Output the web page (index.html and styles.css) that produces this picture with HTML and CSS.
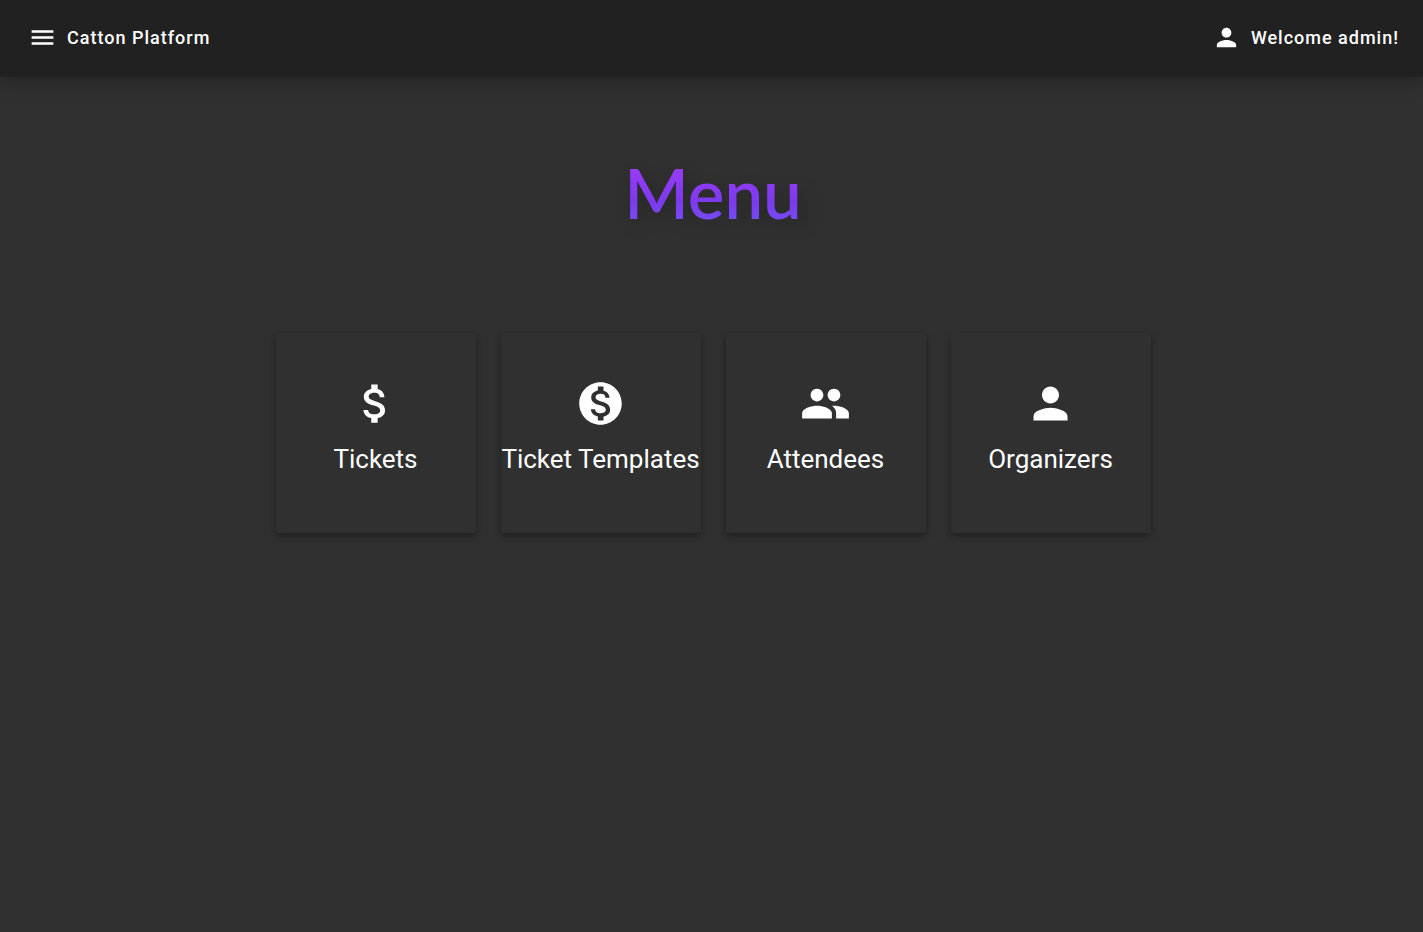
FILE: index.html
```html
<!DOCTYPE html>
<html lang="en">
<head>
  <meta charset="utf-8">
  <title>Catton Platform</title>
  <link rel="stylesheet" href="styles.css">
</head>
<body>
  <header class="toolbar">
    <button class="toolbar-item" type="button">
      <svg class="toolbar-icon" viewBox="0 0 24 24" aria-hidden="true"><path d="M3 18h18v-2H3v2zm0-5h18v-2H3v2zm0-7v2h18V6H3z"/></svg>
      <span>Catton Platform</span>
    </button>
    <button class="toolbar-item" type="button">
      <svg class="toolbar-icon" viewBox="0 0 24 24" aria-hidden="true"><path d="M12 12c2.210 0 4-1.790 4-4s-1.790-4-4-4-4 1.790-4 4 1.790 4 4 4zm0 2c-2.670 0-8 1.340-8 4v2h16v-2c0-2.660-5.330-4-8-4z"/></svg>
      <span>Welcome admin!</span>
    </button>
  </header>
  <main class="content">
    <h1 class="title">Menu</h1>
    <nav class="cards" aria-label="Menu">
      <a class="card" href="#tickets">
        <svg class="card-icon" viewBox="0 0 24 24" aria-hidden="true"><path d="M11.800 10.900c-2.270-.59-3-1.200-3-2.150 0-1.090 1.010-1.850 2.700-1.850 1.780 0 2.440.85 2.500 2.100h2.210c-.07-1.720-1.120-3.300-3.210-3.810V3h-3v2.160c-1.940.42-3.500 1.680-3.500 3.610 0 2.310 1.910 3.460 4.700 4.130 2.500.6 3 1.480 3 2.410 0 .69-.49 1.790-2.700 1.790-2.060 0-2.870-.92-2.980-2.100h-2.200c.12 2.190 1.760 3.420 3.680 3.830V21h3v-2.150c1.950-.37 3.500-1.500 3.500-3.550 0-2.840-2.430-3.810-4.700-4.400z"/></svg>
        <span>Tickets</span>
      </a>
      <a class="card" href="#templates">
        <svg class="card-icon" viewBox="0 0 24 24" aria-hidden="true"><path d="M12 2C6.480 2 2 6.480 2 12s4.480 10 10 10 10-4.480 10-10S17.520 2 12 2zm1.410 16.090V20h-2.670v-1.930c-1.710-.36-3.160-1.460-3.270-3.400h1.960c.1 1.050.82 1.870 2.650 1.870 1.960 0 2.400-.98 2.400-1.590 0-.83-.44-1.610-2.670-2.140-2.480-.6-4.180-1.620-4.180-3.670 0-1.720 1.390-2.840 3.110-3.210V4h2.670v1.950c1.860.45 2.790 1.860 2.850 3.390H14.300c-.05-1.110-.64-1.870-2.220-1.870-1.500 0-2.400.68-2.400 1.640 0 .84.65 1.390 2.670 1.910s4.180 1.390 4.180 3.910c-.01 1.830-1.380 2.830-3.120 3.160z"/></svg>
        <span>Ticket Templates</span>
      </a>
      <a class="card" href="#attendees">
        <svg class="card-icon" viewBox="0 0 24 24" aria-hidden="true"><path d="M16 11c1.660 0 2.990-1.340 2.990-3S17.660 5 16 5c-1.660 0-3 1.340-3 3s1.340 3 3 3zm-8 0c1.660 0 2.990-1.340 2.990-3S9.660 5 8 5C6.340 5 5 6.340 5 8s1.340 3 3 3zm0 2c-2.330 0-7 1.170-7 3.500V19h14v-2.500c0-2.330-4.670-3.500-7-3.500zm8 0c-.29 0-.62.02-.97.05 1.160.84 1.970 1.970 1.970 3.450V19h6v-2.500c0-2.330-4.670-3.500-7-3.500z"/></svg>
        <span>Attendees</span>
      </a>
      <a class="card" href="#organizers">
        <svg class="card-icon" viewBox="0 0 24 24" aria-hidden="true"><path d="M12 12c2.210 0 4-1.790 4-4s-1.790-4-4-4-4 1.790-4 4 1.790 4 4 4zm0 2c-2.670 0-8 1.340-8 4v2h16v-2c0-2.660-5.330-4-8-4z"/></svg>
        <span>Organizers</span>
      </a>
    </nav>
  </main>
</body>
</html>
```
FILE: styles.css
```css
* {
  box-sizing: border-box;
}

body {
  margin: 0;
  min-height: 100vh;
  background: #303030;
  color: #fff;
  font-family: Roboto, sans-serif;
}

.toolbar {
  display: flex;
  justify-content: space-between;
  align-items: center;
  padding: 23px 24px 25px 28px;
  background: #212121;
  box-shadow: 0 4px 20px rgba(0, 0, 0, 0.25);
}

.toolbar-item {
  display: flex;
  align-items: center;
  gap: 10px;
  padding: 0;
  border: 0;
  background: none;
  color: inherit;
  font: 500 18px/29px Roboto, sans-serif;
  letter-spacing: 1px;
  cursor: pointer;
}

.toolbar-icon {
  width: 29px;
  height: 29px;
  fill: currentColor;
}

.content {
  padding: 74px 0 48px 3px;
}

.title {
  width: fit-content;
  margin: 0 auto 98px;
  background: linear-gradient(#a83cff, #7c3aed 60%, #7058f8);
  background-clip: text;
  -webkit-background-clip: text;
  color: transparent;
  font: 600 69px/84px Lato, sans-serif;
  filter: drop-shadow(6px 6px 8px rgba(0, 0, 0, 0.2));
}

.cards {
  display: flex;
  flex-wrap: wrap;
  justify-content: center;
  gap: 25px;
}

.card {
  display: flex;
  flex-direction: column;
  align-items: center;
  gap: 12px;
  width: 200px;
  height: 200px;
  padding-top: 45px;
  border-radius: 2px;
  box-shadow: 0 3px 6px rgba(0, 0, 0, 0.35);
  color: inherit;
  font-size: 26px;
  line-height: 36px;
  text-decoration: none;
  white-space: nowrap;
}

.card-icon {
  width: 51px;
  height: 51px;
  fill: currentColor;
}
```
